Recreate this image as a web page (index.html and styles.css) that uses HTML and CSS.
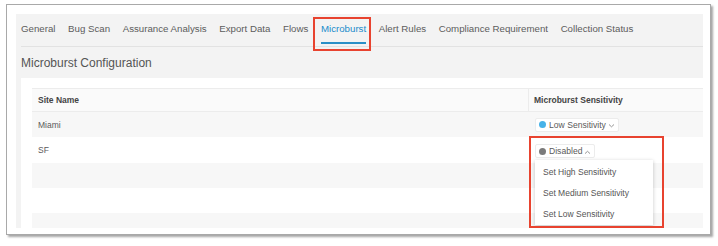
FILE: index.html
```html
<!DOCTYPE html>
<html>
<head>
<meta charset="utf-8">
<link rel="stylesheet" href="styles.css">
</head>
<body>
<div class="frame">
  <div class="panel">
    <nav class="tabs">
      <span class="tab">General</span>
      <span class="tab">Bug Scan</span>
      <span class="tab">Assurance Analysis</span>
      <span class="tab">Export Data</span>
      <span class="tab">Flows</span>
      <span class="tab active">Microburst</span>
      <span class="tab">Alert Rules</span>
      <span class="tab">Compliance Requirement</span>
      <span class="tab">Collection Status</span>
    </nav>
    <h1 class="title">Microburst Configuration</h1>
    <div class="card">
      <div class="table">
        <div class="row head">
          <div class="cell c1">Site Name</div>
          <div class="cell c2">Microburst Sensitivity</div>
        </div>
        <div class="row odd">
          <div class="cell c1">Miami</div>
          <div class="cell c2">
            <span class="pill"><span class="dot blue"></span>Low Sensitivity<svg class="chev" width="7" height="5" viewBox="0 0 7 5"><path d="M1 1.5 L3.5 3.8 L6 1.5" fill="none" stroke="#8a8a8a" stroke-width="0.9"/></svg></span>
          </div>
        </div>
        <div class="row sf">
          <div class="cell c1">SF</div>
          <div class="cell c2">
            <span class="pillwrap">
              <span class="pill"><span class="dot grey"></span>Disabled<svg class="chev" width="7" height="5" viewBox="0 0 7 5"><path d="M1 3.6 L3.5 1.3 L6 3.6" fill="none" stroke="#8a8a8a" stroke-width="0.9"/></svg></span>
              <div class="menu">
                <div class="item">Set High Sensitivity</div>
                <div class="item">Set Medium Sensitivity</div>
                <div class="item">Set Low Sensitivity</div>
              </div>
            </span>
          </div>
        </div>
        <div class="row odd"><div class="cell c1"></div><div class="cell c2"></div></div>
        <div class="row"><div class="cell c1"></div><div class="cell c2"></div></div>
        <div class="row odd"><div class="cell c1"></div><div class="cell c2"></div></div>
      </div>
    </div>
    <div class="mark mark-tab"></div>
    <div class="mark mark-drop"></div>
  </div>
</div>
</body>
</html>
```

FILE: styles.css
```css
* { box-sizing: border-box; }
html, body { margin: 0; padding: 0; background: #ffffff; }
body {
  font-family: "Liberation Sans", Arial, Helvetica, sans-serif;
  color: #5a5a5a;
  width: 718px;
  height: 246px;
  overflow: hidden;
}
.frame {
  margin: 4px 0 0 6px;
  width: 705px;
  height: 231px;
  border: 1px solid #a9a9a9;
  box-shadow: 2px 2px 2px rgba(0, 0, 0, 0.35);
  background: #ffffff;
  padding: 9px 0 0 9px;
}
.panel {
  position: relative;
  width: 687px;
  height: 214px;
  background: #f3f3f3;
  overflow: hidden;
  padding-left: 5px;
}
.tabs {
  display: flex;
  align-items: flex-start;
  gap: 12.6px;
  height: 33px;
  border-bottom: 1px solid #e2e2e2;
  font-size: 9.7px;
}
.tab {
  padding-top: 9px;
  line-height: 12px;
  height: 30px;
  color: #5c5c5c;
  white-space: nowrap;
}
.tab.active {
  color: #1a8ccb;
  border-bottom: 2px solid #2a8fc6;
}
.title {
  margin: 0;
  font-size: 12px;
  font-weight: normal;
  line-height: 32px;
  height: 31px;
  color: #555;
}
.card {
  background: #ffffff;
  height: 150px;
  padding: 10px 0 0 11px;
}
.table {
  width: 671px;
  font-size: 8.5px;
  border-top: 1px solid #ececec;
}
.row {
  display: flex;
  height: 25px;
  align-items: center;
  background: #ffffff;
}
.row.odd { background: #f7f7f7; }
.row.sf { height: 26px; }
.row.head {
  height: 23px;
  background: #fafafa;
  border-bottom: 1px solid #ececec;
  font-weight: bold;
  color: #444;
}
.cell {
  height: 100%;
  display: flex;
  align-items: center;
  padding-left: 6px;
}
.c1 { width: 496px; }
.c2 { flex: 1; padding-left: 7px; }
.row.head .c2 { border-left: 1px solid #ececec; padding-left: 5px; }
.pillwrap { position: relative; display: inline-flex; margin-top: 2px; }
.pill {
  display: inline-flex;
  align-items: center;
  height: 14px;
  padding: 0 3px 0 3px;
  background: #ffffff;
  border: 1px solid #ececec;
  border-radius: 2px;
  color: #5a5a5a;
  font-size: 8.6px;
  white-space: nowrap;
}
.dot {
  width: 7px;
  height: 7px;
  border-radius: 50%;
  margin-right: 3px;
}
.dot.blue { background: #47b2e8; }
.dot.grey { background: #7a7a7a; }
.chev { margin-left: 2px; margin-top: 2px; }
.menu {
  position: absolute;
  left: 0;
  top: 16px;
  width: 118px;
  height: 65px;
  background: #ffffff;
  box-shadow: 0 1px 4px rgba(0, 0, 0, 0.22);
  padding-top: 1.5px;
  z-index: 2;
}
.item {
  height: 21px;
  line-height: 21px;
  padding-left: 8px;
  font-size: 8.5px;
  color: #555;
  white-space: nowrap;
}
.mark {
  position: absolute;
  border: 2px solid #e8432f;
  z-index: 3;
}
.mark-tab { left: 297px; top: 3px; width: 58px; height: 34px; }
.mark-drop { left: 513px; top: 122px; width: 135px; height: 92px; }
```
